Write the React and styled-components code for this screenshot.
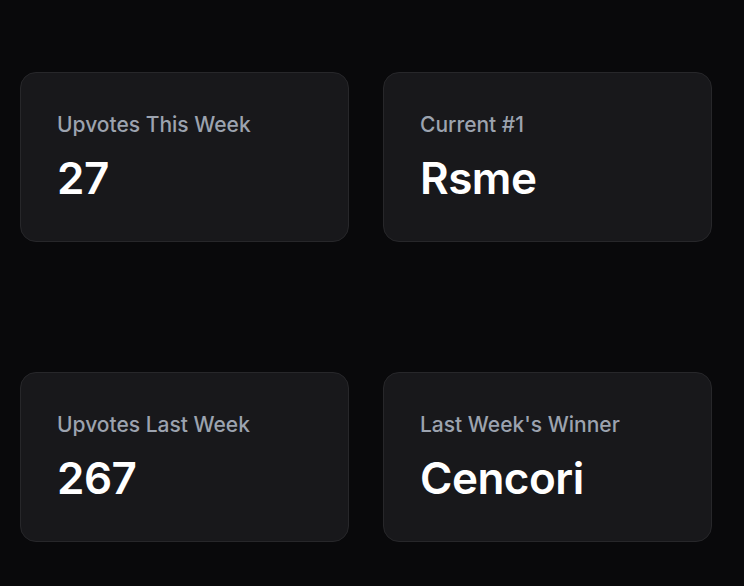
import React from "react";
import styled, { createGlobalStyle } from "styled-components";

const Global = createGlobalStyle`
  html, body { margin: 0; padding: 0; background: #09090b; }
  body { font-family: Inter, "Noto Sans", sans-serif; -webkit-font-smoothing: antialiased; }
`;

const Page = styled.div`
  min-height: 586px;
  box-sizing: border-box;
  padding: 72px 32px 0 20px;
  display: grid;
  grid-template-columns: 329px 329px;
  column-gap: 34px;
  row-gap: 130px;
  align-content: start;
`;

const Card = styled.div`
  box-sizing: border-box;
  height: 170px;
  background: #18181b;
  border: 1px solid #27272a;
  border-radius: 16px;
  padding: 38px 36px 34px;
  display: flex;
  flex-direction: column;
`;

const Label = styled.div`
  color: #9ca3af;
  font-size: 21px;
  line-height: 28px;
  font-weight: 500;
`;

const Value = styled.div`
  color: #ffffff;
  font-size: 44px;
  line-height: 48px;
  font-weight: 600;
  letter-spacing: -0.5px;
  margin-top: 15px;
`;

const stats = [
  { label: "Upvotes This Week", value: "27" },
  { label: "Current #1", value: "Rsme" },
  { label: "Upvotes Last Week", value: "267" },
  { label: "Last Week's Winner", value: "Cencori" },
];

export default function App() {
  return (
    <>
      <Global />
      <Page>
        {stats.map((s) => (
          <Card key={s.label}>
            <Label>{s.label}</Label>
            <Value>{s.value}</Value>
          </Card>
        ))}
      </Page>
    </>
  );
}
